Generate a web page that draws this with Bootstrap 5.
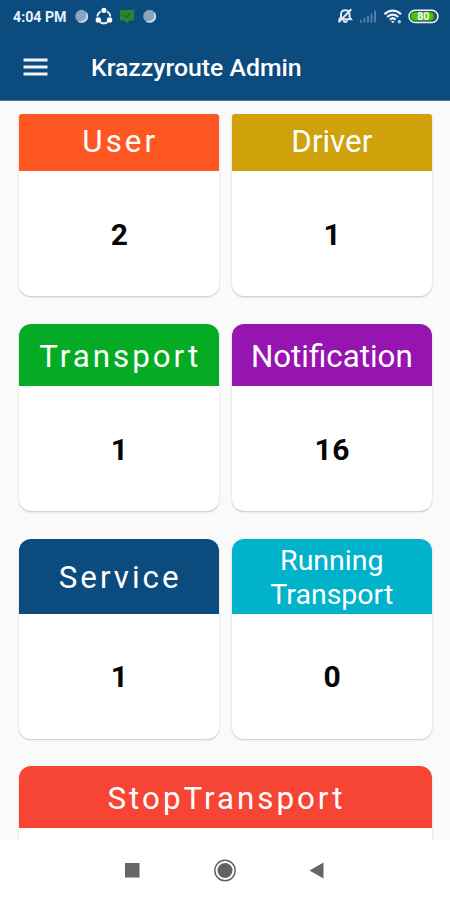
<!DOCTYPE html>
<html lang="en">
<head>
<meta charset="utf-8">
<meta name="viewport" content="width=device-width, initial-scale=1">
<title>Krazzyroute Admin</title>
<link href="https://cdn.jsdelivr.net/npm/bootstrap@5.3.0/dist/css/bootstrap.min.css" rel="stylesheet">
<style>
body { font-family: Roboto, "Liberation Sans", sans-serif; background: #fafafa; color: #050505; }
.screen { height: 900px; }
.app-top { background: #0c4b7e; height: 101px; border-bottom: 1px solid #4a7299; color: #fff; }
.status-row { height: 32px; padding: 0 11px 0 13px; }
.clock { font-size: 14.2px; font-weight: 700; line-height: 32px; width: 62px; color: #e9f0f8; white-space: nowrap; padding-top: 1px; }
.title-row { height: 68px; padding: 2px 0 0 23px; }
.app-title { font-size: 24.8px; font-weight: 500; line-height: 32px; margin-left: 43px; padding-top: 2px; white-space: nowrap; }
.content { padding: 13px 18.4px 0 19.4px; }
.tiles { column-gap: 13px; row-gap: 28px; display: grid; grid-template-columns: 1fr 1fr; }
.tile { border: 0; border-radius: 12px; overflow: hidden; box-shadow: 0 1px 2px rgba(0,0,0,.22); }
.tile-flat { border-radius: 3px 3px 12px 12px; }
.tile-last { margin-top: 27px; }
.tile-head { color: #fff; font-size: 31.3px; line-height: 34px; white-space: nowrap; }
.spaced { letter-spacing: 3px; padding-left: 2px; }
.head-s { height: 57px; padding-bottom: 1px; }
.head-m { height: 62px; padding-top: 3px; }
.head-l { height: 74.5px; padding-top: 3px; }
.two-line { font-size: 28.5px; padding-top: 4px; }
.tile-count { height: 125px; font-size: 30px; font-weight: 700; line-height: 36px; letter-spacing: .6px; padding: 2px 0 0 1px; }
.c-user { background: #ff5722; } .c-driver { background: #cfa20c; }
.c-transport { background: #06ab24; } .c-notice { background: #9614b0; }
.c-service { background: #0c4b7e; } .c-running { background: #00b3ca; }
.c-stop { background: #f64435; padding-top: 5px; }
.sys-nav { height: 60px; background: #fff; }
svg { display: block; flex: none; }
</style>
</head>
<body>
<div class="screen d-flex flex-column overflow-hidden">
  <header class="app-top flex-shrink-0">
    <div class="status-row d-flex align-items-center">
      <span class="clock">4:04 PM</span>
      <svg width="84" height="20" viewBox="0 0 84 20">
        <g id="moon"><circle cx="6.6" cy="10.2" r="6.4" fill="#7f9fbd"/><path d="M11 5.800a6.300 6.300 0 1 1-8.600 9.200c6 1.400 9.600-3 8.600-9.200" fill="#c9d9e8"/><circle cx="6.200" cy="9.800" r="5" fill="#88a6c2"/></g>
        <g fill="none" stroke="#e9f4ff" stroke-width="1.9"><path d="M25.700 5.500a6.700 6.700 0 0 0-3.400 5M32 5.500a6.700 6.700 0 0 1 3.400 5M25 16.100a6.700 6.700 0 0 0 7.600 0"/></g>
        <g fill="#fff"><circle cx="28.900" cy="4.300" r="2.600"/><circle cx="23.300" cy="14" r="2.700"/><circle cx="34.600" cy="14" r="2.700"/></g>
        <path d="M45 4h14v10.500h-4.500L52 17l-2.500-2.500H45z" fill="#2f8230"/><path d="M49 9l2.500 2.500L55.500 7" fill="none" stroke="#1c6638" stroke-width="1.400"/>
        <use href="#moon" x="68"/>
      </svg>
      <svg class="ms-auto" width="103" height="20" viewBox="0 0 103 20">
        <g fill="none" stroke="#dde9f5" stroke-width="2"><path d="M3.500 13.300h11.500l-1.500-2.200V8.500c0-2.700-1.500-4.300-4.200-4.300S5 5.800 5 8.500v2.600zM7.500 14.500c.5 2 3.100 2 3.600 0M2.600 16.300L15.300 3.300"/></g>
        <g fill="#537fa6"><path d="M24 14h2v2.500h-2zM27.500 12h2v4.500h-2zM31 10h2v6.500h-2zM34.500 7.500h2v9h-2zM38 4.500h2v12h-2z"/></g>
        <g fill="none" stroke="#eaf4ff" stroke-width="2.200"><path d="M48.500 8.200c4.800-4.800 11.700-4.800 16.500 0M51.200 11c3.200-3.300 7.800-3.300 11.100 0M53.900 13.700c1.700-1.700 4-1.700 5.700 0"/></g>
        <path d="M55 14.900h3.600l-1.800 2.300z" fill="#fff"/><circle cx="63.300" cy="15.800" r="1.700" fill="#a9d1ff"/>
        <rect x="73" y="4.300" width="29" height="12.200" rx="6.100" fill="#315c60" stroke="#eef5ee" stroke-width="1.500"/>
        <rect x="75" y="6.200" width="22.500" height="8.400" rx="4" fill="#45c50e"/>
        <text x="87.300" y="14.200" text-anchor="middle" font-size="10.500" font-weight="700" fill="#fff">80</text>
      </svg>
    </div>
    <div class="title-row d-flex align-items-center">
      <svg width="25" height="19" viewBox="0 0 25 19"><path d="M.5 2h24M.5 9h24M.5 16h24" stroke="#f0f1fa" stroke-width="2.900"/></svg>
      <h1 class="app-title mb-0">Krazzyroute Admin</h1>
    </div>
  </header>
  <main class="content flex-grow-1 overflow-hidden">
    <div class="tiles">
      <div class="card tile tile-flat"><div class="tile-head head-s c-user spaced d-flex align-items-center justify-content-center">User</div><div class="tile-count d-flex align-items-center justify-content-center">2</div></div>
      <div class="card tile tile-flat"><div class="tile-head head-s c-driver d-flex align-items-center justify-content-center">Driver</div><div class="tile-count d-flex align-items-center justify-content-center">1</div></div>
      <div class="card tile"><div class="tile-head head-m c-transport spaced d-flex align-items-center justify-content-center">Transport</div><div class="tile-count d-flex align-items-center justify-content-center">1</div></div>
      <div class="card tile"><div class="tile-head head-m c-notice d-flex align-items-center justify-content-center">Notification</div><div class="tile-count d-flex align-items-center justify-content-center">16</div></div>
      <div class="card tile"><div class="tile-head head-l c-service spaced d-flex align-items-center justify-content-center">Service</div><div class="tile-count d-flex align-items-center justify-content-center">1</div></div>
      <div class="card tile"><div class="tile-head head-l two-line c-running d-flex align-items-center justify-content-center text-center">Running<br>Transport</div><div class="tile-count d-flex align-items-center justify-content-center">0</div></div>
    </div>
    <div class="card tile tile-last"><div class="tile-head head-m c-stop spaced d-flex align-items-center justify-content-center">StopTransport</div><div class="tile-count"></div></div>
  </main>
  <nav class="sys-nav flex-shrink-0 d-flex justify-content-center align-items-center">
    <svg width="210" height="26" viewBox="0 0 210 26">
      <rect x="5" y="6" width="14.500" height="14.500" fill="#666"/>
      <circle cx="105" cy="13.500" r="10.200" fill="none" stroke="#606060" stroke-width="1.400"/><circle cx="105" cy="13.500" r="7.500" fill="#626262"/>
      <path d="M189.500 13.500L203.500 5.500v16z" fill="#666"/>
    </svg>
  </nav>
</div>
<script src="https://cdn.jsdelivr.net/npm/bootstrap@5.3.0/dist/js/bootstrap.bundle.min.js"></script>
</body>
</html>
